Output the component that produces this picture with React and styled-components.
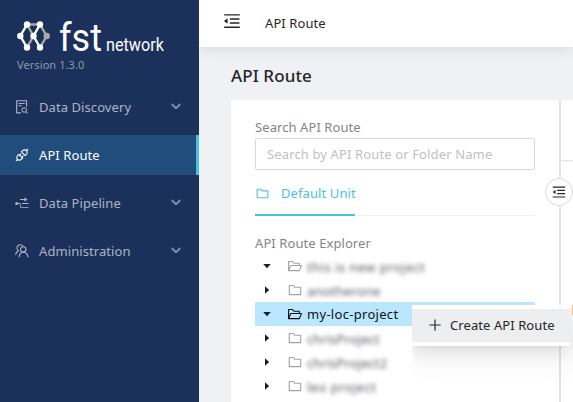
import React from 'react';
import styled, { createGlobalStyle, css } from 'styled-components';
import {
  AiOutlineApi,
  AiOutlineFileSearch,
  AiOutlineFolder,
  AiOutlineFolderOpen,
  AiOutlineMenuFold,
  AiOutlinePlus,
} from 'react-icons/ai';

const GlobalStyle = createGlobalStyle`
  * { box-sizing: border-box; }
  body {
    margin: 0;
    overflow: hidden;
    font-family: "Noto Sans", "Open Sans", sans-serif;
    font-size: 13px;
    color: #262626;
  }
`;

const Page = styled.div`
  display: flex;
  width: 573px;
  height: 402px;
  overflow: hidden;
  background: #f0f1f5;
`;

const Sidebar = styled.aside`
  flex: 0 0 199px;
  background: #1b315b;
  display: flex;
  flex-direction: column;
  z-index: 2;
`;

const Brand = styled.div`
  height: 87px;
  padding: 20px 0 0 17px;
`;

const Logo = styled.svg`
  display: block;
  width: 150px;
  height: 36px;
  overflow: visible;
`;

const Version = styled.div`
  font-size: 11px;
  line-height: 16px;
  margin-top: 1px;
  letter-spacing: 0.08px;
  color: #8e99ae;
`;

const Nav = styled.nav`
  display: flex;
  flex-direction: column;
  gap: 8px;
`;

const NavItem = styled.div`
  height: 40px;
  display: flex;
  align-items: center;
  padding: 0 15px 0 14px;
  border-right: 3px solid transparent;
  color: #adb5c4;
  ${(p) =>
    p.$active &&
    css`
      color: #fff;
      background: #214d7d;
      border-right-color: #4cbfe6;
    `}
  > svg {
    flex: none;
  }
`;

const Label = styled.span`
  white-space: nowrap;
  letter-spacing: ${(p) => p.$track ?? 0.08}px;
`;

const NavLabel = styled(Label)`
  flex: 1;
  margin-left: 9px;
`;

const Main = styled.main`
  flex: 1;
  min-width: 0;
  display: flex;
  flex-direction: column;
`;

const Header = styled.header`
  flex: 0 0 47px;
  display: flex;
  align-items: center;
  gap: 23px;
  padding: 0 0 2px 23px;
  background: #fff;
  box-shadow: 0 2px 14px rgba(0, 21, 41, 0.1);
  svg {
    margin-top: -3px;
  }
`;

const Title = styled.h1`
  height: 53px;
  flex: none;
  margin: 0;
  padding-left: 32px;
  font-size: 17px;
  line-height: 57px;
  font-weight: 500;
  letter-spacing: 0.1px;
`;

const Content = styled.div`
  flex: 1;
  display: flex;
  margin-left: 32px;
  background: #fff;
`;

const Explorer = styled.section`
  flex: 0 0 328px;
  padding: 17px 24px 0;
`;

const Caption = styled.div`
  line-height: 20px;
  color: #858585;
  letter-spacing: 0.08px;
  white-space: nowrap;
`;

const SearchInput = styled.input`
  display: block;
  width: 280px;
  height: 32px;
  margin-top: 1px;
  padding: 0 11px;
  border: 1px solid #d9d9d9;
  border-radius: 2px;
  font: inherit;
  letter-spacing: 0.13px;
  outline: none;
  &::placeholder {
    color: #bfbfbf;
    opacity: 1;
  }
`;

const Tabs = styled.div`
  height: 46px;
  border-bottom: 1px solid #f0f0f0;
  display: flex;
`;

const Tab = styled.div`
  height: 46px;
  width: 100px;
  display: flex;
  align-items: center;
  gap: 11px;
  padding-top: 2px;
  color: #4cbfe6;
  border-bottom: 2px solid #4cbfe6;
  white-space: nowrap;
  svg {
    flex: none;
  }
`;

const TreeCaption = styled(Caption)`
  margin-top: 17px;
`;

const Tree = styled.div`
  display: flex;
  flex-direction: column;
  margin-top: 1px;
`;

const TreeRow = styled.div`
  height: 24px;
  display: flex;
  align-items: center;
  padding-left: 7px;
  background: ${(p) => (p.$selected ? '#bae7ff' : 'transparent')};
  color: ${(p) => (p.$selected ? '#111' : '#a3a3a3')};
`;

const Caret = styled.svg`
  width: 10px;
  height: 10px;
  margin-right: 15px;
  color: #1f1f1f;
`;

const RowName = styled(Label)`
  margin-left: 4px;
`;

const ObscuredName = styled(RowName)`
  padding-top: 1px;
  color: #5c5760;
  filter: blur(2px);
`;

const Splitter = styled.div`
  flex: 0 0 2px;
  background: #e2e3e8;
  position: relative;
`;

const CollapseButton = styled.button`
  position: absolute;
  left: -14px;
  top: 78px;
  width: 28px;
  height: 28px;
  padding: 0;
  display: grid;
  place-items: center;
  border: 1px solid #d9d9d9;
  border-radius: 50%;
  background: #fff;
  color: #262626;
`;

const Detail = styled.section`
  flex: 1;
`;

const DetailCard = styled.div`
  height: 61px;
  border-bottom: 1px solid #e3e4e8;
  box-shadow: 0 1px 2px rgba(0, 0, 0, 0.04);
`;

const DetailMark = styled.div`
  width: 2px;
  height: 10px;
  margin: 144px 0 0 11px;
  background: #ffc884;
`;

const ContextMenu = styled.div`
  position: absolute;
  z-index: 4;
  left: 412px;
  top: 305px;
  width: 158px;
  padding: 4px 0;
  background: #fff;
  box-shadow:
    0 3px 6px -4px rgba(0, 0, 0, 0.12),
    0 6px 16px rgba(0, 0, 0, 0.08),
    0 9px 28px 8px rgba(0, 0, 0, 0.05);
  clip-path: inset(0 -3px -60px 0);
`;

const MenuEntry = styled.div`
  height: 33px;
  display: flex;
  align-items: center;
  gap: 7px;
  padding: 0 0 2px 15px;
  background: #eceef0;
`;

const PipelineIcon = () => (
  <svg width="16" height="16" viewBox="0 0 16 16" fill="none" stroke="currentColor">
    <path d="M6 4.5H11M3 8.5H6M8 8.5H14.5" />
    <path d="M6.5 8.5V12.5H14.5" strokeOpacity=".75" />
    <path d="M10.5 2.2L13.5 4.5L10.5 6.8Z" fill="currentColor" stroke="none" />
    <circle cx="2.6" cy="8.5" r="1.5" fill="currentColor" stroke="none" />
  </svg>
);

const PeopleIcon = () => (
  <svg width="16" height="16" viewBox="0 0 16 16" fill="none" stroke="currentColor" strokeWidth="1.1">
    <path d="M4.6 8A3.4 3.4 0 1 1 9.2 3.2" />
    <circle cx="9.2" cy="6.4" r="2.7" />
    <path d="M5.2 14.2C5.3 11.2 6.9 9.4 9.2 9.2C12 9.4 13.7 11.3 14 14.2" />
    <path d="M1.7 11.8C1.8 9.8 2.9 8.6 4.6 8" />
  </svg>
);

const Chevron = () => (
  <svg width="10" height="8" viewBox="0 0 10 8" fill="none" stroke="#8390a8" strokeWidth="1.9">
    <path d="M.8 1.2L5 5.2L9.2 1.2" />
  </svg>
);

const TreeCaret = ({ open }) => (
  <Caret viewBox="0 0 10 10" fill="currentColor">
    {open ? <path d="M1.2 3H8.8L5 7.2Z" /> : <path d="M3 1.2V8.8L7.2 5Z" />}
  </Caret>
);

const BrandLogo = () => (
  <Logo viewBox="0 0 150 36">
    <g fill="none" strokeWidth="2.4">
      <path d="M10 4.5H23M23 4.5L29.7 16L23 27.5" stroke="#aaa9a7" />
      <path d="M10 4.5L16.5 16L10 27.5" stroke="#aaa9a7" />
      <path d="M10 4.5L3.3 16L10 27.5M23 4.5L16.5 16L23 27.5" stroke="#fff" />
    </g>
    <g fill="#fff">
      <circle cx="10" cy="4.5" r="3.2" />
      <circle cx="23" cy="4.5" r="3.2" />
      <circle cx="3.3" cy="16" r="3.2" />
      <circle cx="16.5" cy="16" r="3.2" />
      <circle cx="10" cy="27.5" r="3.2" />
      <circle cx="23" cy="27.5" r="3.2" />
    </g>
    <circle cx="29.7" cy="16" r="3.2" fill="#aaa9a7" />
    <g fill="#fff" fontFamily="Roboto, sans-serif">
      <text x="42" y="30.5" fontSize="38" textLength="43" lengthAdjust="spacingAndGlyphs">fst</text>
      <text x="89" y="30.5" fontSize="18" textLength="58" lengthAdjust="spacingAndGlyphs">network</text>
    </g>
  </Logo>
);

const navItems = [
  { label: 'Data Discovery', icon: <AiOutlineFileSearch size={16} />, expandable: true },
  { label: 'API Route', icon: <AiOutlineApi size={16} />, active: true },
  { label: 'Data Pipeline', icon: <PipelineIcon />, expandable: true },
  { label: 'Administration', icon: <PeopleIcon />, expandable: true },
];

const folders = [
  { name: 'this is new project', open: true, obscured: true, track: 0.45 },
  { name: 'anotherone', obscured: true, track: 0.2 },
  { name: 'my-loc-project', open: true, selected: true, track: 0.3 },
  { name: 'chrisProject', obscured: true },
  { name: 'chrisProject2', obscured: true },
  { name: 'leo project', obscured: true, track: 0.45 },
];

export default function App() {
  return (
    <>
      <GlobalStyle />
      <Page>
        <Sidebar>
          <Brand>
            <BrandLogo />
            <Version>Version 1.3.0</Version>
          </Brand>
          <Nav>
            {navItems.map((item) => (
              <NavItem key={item.label} $active={item.active}>
                {item.icon}
                <NavLabel>{item.label}</NavLabel>
                {item.expandable && <Chevron />}
              </NavItem>
            ))}
          </Nav>
        </Sidebar>
        <Main>
          <Header>
            <AiOutlineMenuFold size={20} />
            <Label>API Route</Label>
          </Header>
          <Title>API Route</Title>
          <Content>
            <Explorer>
              <Caption>Search API Route</Caption>
              <SearchInput placeholder="Search by API Route or Folder Name" />
              <Tabs>
                <Tab>
                  <AiOutlineFolder size={15} />
                  <Label $track={0.1}>Default Unit</Label>
                </Tab>
              </Tabs>
              <TreeCaption>API Route Explorer</TreeCaption>
              <Tree>
                {folders.map((f) => {
                  const Name = f.obscured ? ObscuredName : RowName;
                  const Folder = f.open ? AiOutlineFolderOpen : AiOutlineFolder;
                  return (
                    <TreeRow key={f.name} $selected={f.selected}>
                      <TreeCaret open={f.open} />
                      <Folder size={16} />
                      <Name $track={f.track}>{f.name}</Name>
                    </TreeRow>
                  );
                })}
              </Tree>
            </Explorer>
            <Splitter>
              <CollapseButton aria-label="Collapse">
                <AiOutlineMenuFold size={16} />
              </CollapseButton>
            </Splitter>
            <Detail>
              <DetailCard />
              <DetailMark />
            </Detail>
          </Content>
        </Main>
        <ContextMenu>
          <MenuEntry>
            <AiOutlinePlus size={16} />
            <Label>Create API Route</Label>
          </MenuEntry>
        </ContextMenu>
      </Page>
    </>
  );
}
